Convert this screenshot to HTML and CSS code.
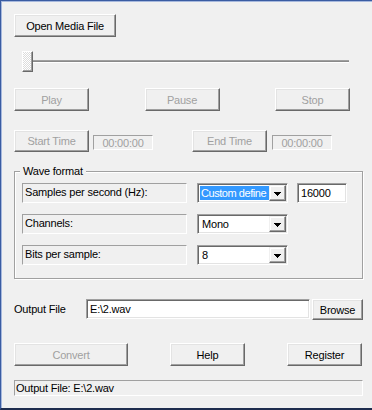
FILE: index.html
```html
<!DOCTYPE html>
<html lang="en">
<head>
  <meta charset="UTF-8" />
  <title>Media to Wave</title>
  <link rel="stylesheet" href="styles.css">
</head>
<body>
  <div class="window">
    <div class="top-row">
      <button class="btn btn-open">Open Media File</button>
    </div>

    <div class="slider">
      <div class="track"></div>
      <div class="thumb"></div>
    </div>

    <div class="transport">
      <button class="btn" disabled>Play</button>
      <button class="btn" disabled>Pause</button>
      <button class="btn" disabled>Stop</button>
    </div>

    <div class="times">
      <button class="btn btn-time" disabled>Start Time</button>
      <span class="timebox">00:00:00</span>
      <button class="btn btn-time btn-end" disabled>End Time</button>
      <span class="timebox">00:00:00</span>
    </div>

    <fieldset class="group">
      <legend>Wave format</legend>

      <div class="row">
        <span class="field-label">Samples per second (Hz):</span>
        <div class="combo">
          <span class="combo-text selected">Custom define</span>
          <span class="combo-btn"><svg width="7" height="4" viewBox="0 0 7 4"><path d="M0 0h7v1H0zM1 1h5v1H1zM2 2h3v1H2zM3 3h1v1H3z" fill="#000"/></svg></span>
        </div>
        <input class="edit edit-rate" type="text" value="16000" />
      </div>

      <div class="row">
        <span class="field-label">Channels:</span>
        <div class="combo">
          <span class="combo-text">Mono</span>
          <span class="combo-btn"><svg width="7" height="4" viewBox="0 0 7 4"><path d="M0 0h7v1H0zM1 1h5v1H1zM2 2h3v1H2zM3 3h1v1H3z" fill="#000"/></svg></span>
        </div>
      </div>

      <div class="row">
        <span class="field-label">Bits per sample:</span>
        <div class="combo">
          <span class="combo-text">8</span>
          <span class="combo-btn"><svg width="7" height="4" viewBox="0 0 7 4"><path d="M0 0h7v1H0zM1 1h5v1H1zM2 2h3v1H2zM3 3h1v1H3z" fill="#000"/></svg></span>
        </div>
      </div>
    </fieldset>

    <div class="output-row">
      <label class="output-label" for="outfile">Output File</label>
      <input class="edit edit-file" id="outfile" type="text" value="E:\2.wav" />
      <button class="btn btn-browse">Browse</button>
    </div>

    <div class="actions">
      <button class="btn btn-convert" disabled>Convert</button>
      <button class="btn btn-help">Help</button>
      <button class="btn btn-register">Register</button>
    </div>

    <div class="status">Output File: E:\2.wav</div>
  </div>
</body>
</html>
```

FILE: styles.css
```css
html, body {
  margin: 0;
  padding: 0;
  background-color: #f0f0f0;
}
body {
  font-family: "Liberation Sans", Arial, sans-serif;
  font-size: 11px;
  letter-spacing: -0.2px;
  color: #000;
}
.window {
  height: 410px;
  box-sizing: border-box;
  border-top: 1px solid #3a5ca2;
  border-left: 1px solid #3a5ca2;
  border-bottom: 2px solid #1e2c4e;
  box-shadow: inset 1px 1px 0 #a6b8dd;
  padding: 13px 0 0 13px;
}

/* classic raised button */
.btn {
  font: inherit;
  letter-spacing: inherit;
  color: #000;
  background-color: #f0f0f0;
  width: 75px;
  height: 23px;
  padding: 0;
  margin: 0;
  box-sizing: border-box;
  border: 1px solid;
  border-color: #fff #696969 #696969 #fff;
  box-shadow: inset -1px -1px 0 #a0a0a0, inset 1px 1px 0 #e3e3e3;
  border-radius: 0;
  line-height: 20px;
  text-align: center;
  white-space: nowrap;
}
.btn:disabled {
  color: #a0a0a0;
}

.top-row {
  display: flex;
}
.btn-open {
  width: 102px;
}

.slider {
  position: relative;
  margin: 14px 0 0 8px;
  width: 327px;
  height: 21px;
}
.track {
  position: relative;
  top: 9px;
  height: 1px;
  background-color: #8a8a8a;
  border-top: 1px solid #a0a0a0;
  border-bottom: 1px solid #fff;
}
.thumb {
  position: absolute;
  left: 0;
  top: 0;
  width: 11px;
  height: 21px;
  box-sizing: border-box;
  border: 1px solid;
  border-color: #fff #696969 #696969 #fff;
  box-shadow: inset -1px -1px 0 #a0a0a0;
  background: repeating-conic-gradient(#fff 0 25%, #dcdcdc 0 50%) 0 0 / 2px 2px;
}

.transport {
  display: flex;
  justify-content: space-between;
  width: 336px;
  margin-top: 16px;
}

.times {
  display: flex;
  align-items: flex-start;
  margin-top: 19px;
}
.btn-time {
  height: 22px;
  line-height: 19px;
}
.btn-end {
  margin-left: 39px;
}
.timebox {
  width: 60px;
  height: 15px;
  box-sizing: border-box;
  margin: 5px 0 0 4px;
  border: 1px solid;
  border-color: #a0a0a0 #fff #fff #a0a0a0;
  color: #a0a0a0;
  text-align: center;
  line-height: 14px;
}
.btn-end + .timebox {
  margin-left: 5px;
}

.group {
  width: 349px;
  box-sizing: border-box;
  margin: 13px 0 0 0;
  padding: 5px 0 13px 7px;
  min-inline-size: 0;
  border: 1px solid #a0a0a0;
  box-shadow: 1px 1px 0 #fff, inset 1px 1px 0 #fff;
}
.group legend {
  margin-left: -2px;
  padding: 0 3px;
  line-height: 13px;
  background-color: #f0f0f0;
}
.row {
  display: flex;
  height: 20px;
}
.row + .row {
  margin-top: 11px;
}
.field-label {
  width: 165px;
  height: 20px;
  box-sizing: border-box;
  border: 1px solid;
  border-color: #a0a0a0 #fff #fff #a0a0a0;
  padding-left: 2px;
  line-height: 17px;
}

/* sunken field */
.combo, .edit {
  box-sizing: border-box;
  height: 20px;
  background-color: #fff;
  border: 1px solid;
  border-color: #a0a0a0 #fff #fff #a0a0a0;
  box-shadow: inset 1px 1px 0 #696969, inset -1px -1px 0 #e3e3e3;
}
.combo {
  display: flex;
  width: 91px;
  margin-left: 10px;
  padding: 1px;
}
.combo-text {
  flex: 1;
  min-width: 0;
  margin: 1px 0 1px 2px;
  padding-left: 1px;
  line-height: 14px;
  white-space: nowrap;
}
.combo-text.selected {
  margin-left: 1px;
  padding-left: 1px;
  letter-spacing: -0.45px;
  background-color: #3399ff;
  color: #fff;
}
.combo-btn {
  flex: none;
  width: 17px;
  height: 16px;
  box-sizing: border-box;
  border: 1px solid;
  border-color: #f0f0f0 #696969 #696969 #f0f0f0;
  box-shadow: inset -1px -1px 0 #a0a0a0, inset 1px 1px 0 #fff;
  background-color: #f0f0f0;
  display: flex;
  align-items: center;
  justify-content: center;
}
.combo-btn svg {
  display: block;
  margin-top: 1px;
}
.edit {
  font: inherit;
  letter-spacing: inherit;
  color: #000;
  margin: 0;
  padding: 0 0 0 3px;
  border-radius: 0;
  outline: none;
}
.edit-rate {
  width: 50px;
  margin-left: 9px;
}

.output-row {
  display: flex;
  align-items: flex-start;
  margin-top: 20px;
}
.output-label {
  width: 72px;
  line-height: 20px;
}
.edit-file {
  width: 224px;
}
.btn-browse {
  width: 51px;
  height: 21px;
  margin-left: 2px;
  line-height: 18px;
}

.actions {
  display: flex;
  margin-top: 23px;
}
.btn-convert {
  width: 114px;
}
.btn-help, .btn-register {
  margin-left: 42px;
}

.status {
  width: 349px;
  height: 16px;
  box-sizing: border-box;
  margin-top: 14px;
  border: 1px solid;
  border-color: #a0a0a0 #fff #fff #a0a0a0;
  padding-left: 1px;
  line-height: 14px;
}
```
